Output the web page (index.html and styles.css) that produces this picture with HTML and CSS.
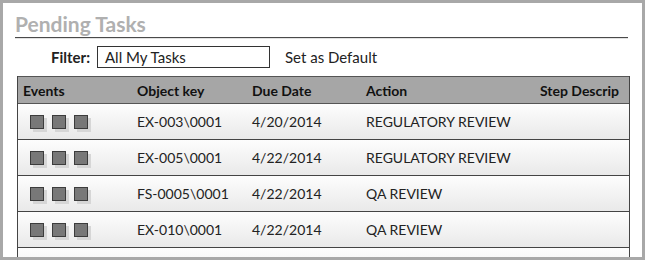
FILE: index.html
```html
<!DOCTYPE html>
<html lang="en">
<head>
    <meta charset="UTF-8">
    <title>Pending Tasks</title>
    <link rel="stylesheet" href="styles.css">
</head>
<body>
    <div class="frame">
        <h2 class="title">Pending Tasks</h2>

        <div class="filter">
            <label for="filterBox">Filter:</label>
            <div class="filter-box" id="filterBox">All My Tasks</div>
            <span class="default-link">Set as Default</span>
        </div>

        <div class="grid">
            <div class="row head">
                <div class="cell first">Events</div>
                <div class="cell">Object key</div>
                <div class="cell">Due Date</div>
                <div class="cell">Action</div>
                <div class="cell last">Step Descrip</div>
            </div>
            <div class="row">
                <div class="cell events"><span class="sq"></span><span class="sq"></span><span class="sq"></span></div>
                <div class="cell">EX-003\0001</div>
                <div class="cell">4/20/2014</div>
                <div class="cell">REGULATORY REVIEW</div>
                <div class="cell last"></div>
            </div>
            <div class="row">
                <div class="cell events"><span class="sq"></span><span class="sq"></span><span class="sq"></span></div>
                <div class="cell">EX-005\0001</div>
                <div class="cell">4/22/2014</div>
                <div class="cell">REGULATORY REVIEW</div>
                <div class="cell last"></div>
            </div>
            <div class="row">
                <div class="cell events"><span class="sq"></span><span class="sq"></span><span class="sq"></span></div>
                <div class="cell">FS-0005\0001</div>
                <div class="cell">4/22/2014</div>
                <div class="cell">QA REVIEW</div>
                <div class="cell last"></div>
            </div>
            <div class="row">
                <div class="cell events"><span class="sq"></span><span class="sq"></span><span class="sq"></span></div>
                <div class="cell">EX-010\0001</div>
                <div class="cell">4/22/2014</div>
                <div class="cell">QA REVIEW</div>
                <div class="cell last"></div>
            </div>
            <div class="row"></div>
        </div>
    </div>
</body>
</html>
```

FILE: styles.css
```css
/* Global Styles */

* {
    margin: 0;
    padding: 0;
    box-sizing: border-box;
}

body {
    font-family: 'Lato', 'Liberation Sans', sans-serif;
    color: #222;
    background-color: #fff;
}

/* Frame */

.frame {
    width: 645px;
    height: 260px;
    border: 3px solid #a8a8a8;
    overflow: hidden;
    background-color: #fff;
}

.title {
    margin: 9px 14px 0 12px;
    padding-bottom: 1px;
    font-size: 21px;
    line-height: 24px;
    font-weight: 700;
    color: #b0b0b0;
    border-bottom: 1px solid #4a4a4a;
    box-shadow: 0 1px 0 #e2e2e2;
}

/* Filter */

.filter {
    display: flex;
    align-items: center;
    margin: 8px 0 0 48px;
    font-size: 15px;
}

.filter label {
    font-weight: 700;
    margin-right: 7px;
}

.filter-box {
    width: 173px;
    height: 22px;
    line-height: 20px;
    padding-left: 7px;
    border: 1px solid #333;
}

.default-link {
    margin-left: 15px;
}

/* Grid */

.grid {
    margin: 8px 0 0 14px;
    width: 613px;
    border-left: 1px solid #444;
    border-right: 1px solid #444;
    font-size: 14px;
}

.row {
    display: grid;
    grid-template-columns: 119px 115px 114px 1fr auto;
    align-items: center;
    height: 36px;
    border-bottom: 1px solid #444;
    background: linear-gradient(#fdfdfd, #e9e9e9);
}

.row.head {
    height: 28px;
    border-top: 1px solid #555;
    border-bottom: 1px solid #555;
    background: #a6a6a6;
    font-weight: 700;
    color: #111;
}

.cell.first {
    padding-left: 5px;
}

.cell.last {
    padding-right: 10px;
    text-align: right;
}

.cell.events {
    display: flex;
    gap: 8px;
    padding-left: 12px;
}

.sq {
    width: 14px;
    height: 14px;
    border: 1px solid #3c3c3c;
    background-color: #787878;
    box-shadow: 3px 3px 0 #d6d6d6;
}
```
